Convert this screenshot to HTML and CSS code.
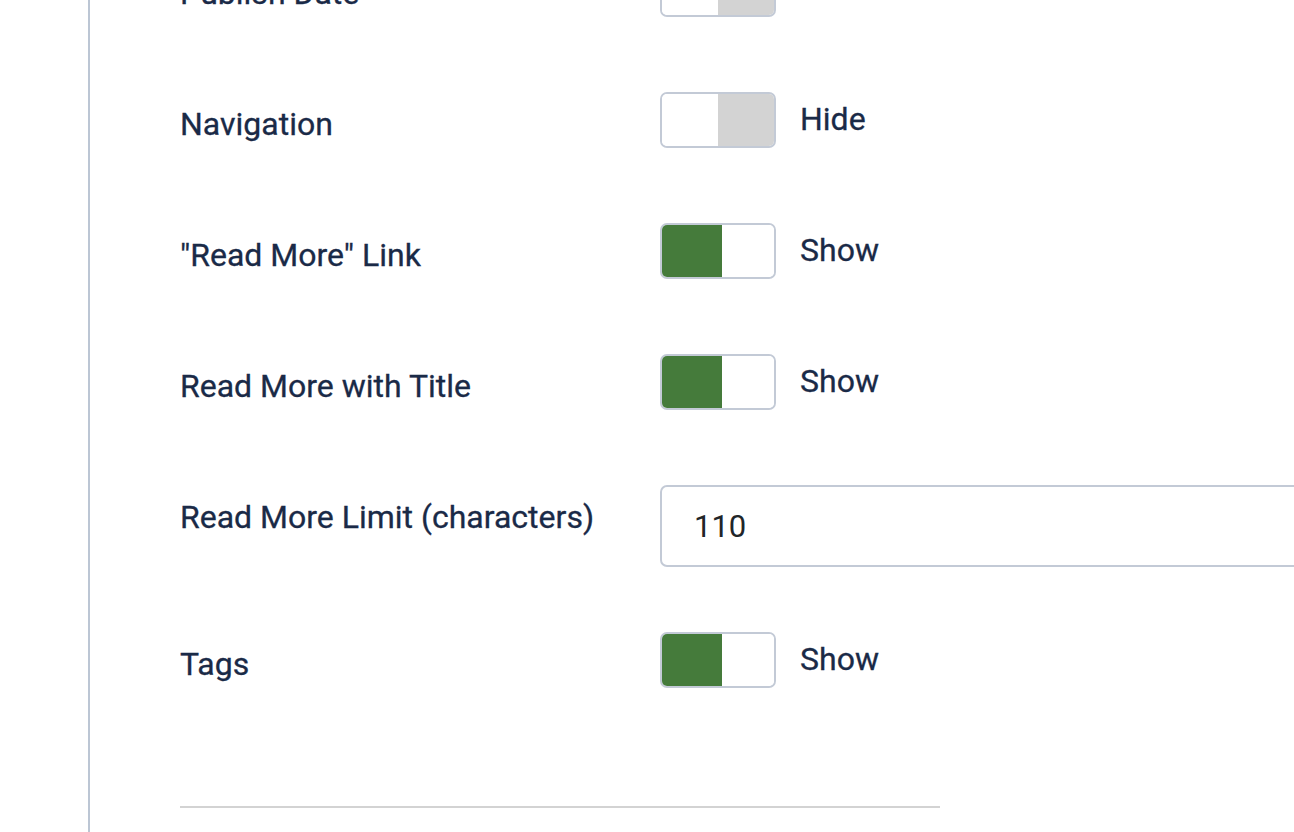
FILE: index.html
```html
<!DOCTYPE html>
<html lang="en">
<head>
<meta charset="utf-8">
<title>Options</title>
<link rel="stylesheet" href="styles.css">
</head>
<body>
<div class="page">
  <div class="panel">
    <div class="fields">
      <div class="row">
        <div class="label">Publish Date</div>
        <div class="control">
          <span class="switch off"><span class="half a"></span><span class="half b"></span></span>
          <span class="state">Hide</span>
        </div>
      </div>
      <div class="row">
        <div class="label">Navigation</div>
        <div class="control">
          <span class="switch off"><span class="half a"></span><span class="half b"></span></span>
          <span class="state">Hide</span>
        </div>
      </div>
      <div class="row">
        <div class="label">"Read More" Link</div>
        <div class="control">
          <span class="switch on"><span class="half a"></span><span class="half b"></span></span>
          <span class="state">Show</span>
        </div>
      </div>
      <div class="row">
        <div class="label">Read More with Title</div>
        <div class="control">
          <span class="switch on"><span class="half a"></span><span class="half b"></span></span>
          <span class="state">Show</span>
        </div>
      </div>
      <div class="row">
        <div class="label">Read More Limit (characters)</div>
        <div class="control">
          <input class="text-input" type="text" value="110">
        </div>
      </div>
      <div class="row">
        <div class="label">Tags</div>
        <div class="control">
          <span class="switch on"><span class="half a"></span><span class="half b"></span></span>
          <span class="state">Show</span>
        </div>
      </div>
    </div>
    <hr class="divider">
  </div>
</div>
</body>
</html>
```

FILE: styles.css
```css
html, body {
  margin: 0;
  padding: 0;
  background: #ffffff;
  overflow: hidden;
}
body {
  font-family: Roboto, "Liberation Sans", Arial, sans-serif;
  color: #1a2a47;
  width: 1294px;
  height: 832px;
}
.page {
  padding-left: 88px;
  height: 832px;
  overflow: hidden;
}
.panel {
  display: flow-root;
  border-left: 2px solid #bcc6d4;
  min-height: 832px;
  padding-left: 90px;
  box-sizing: border-box;
}
.fields {
  display: flex;
  flex-direction: column;
  gap: 65px;
  margin-top: -39px;
}
.row {
  display: grid;
  grid-template-columns: 480px 1fr;
  min-height: 66px;
  align-items: start;
}
.label {
  font-size: 32px;
  line-height: 46px;
  padding-top: 9px;
  -webkit-text-stroke: 0.3px #1a2a47;
}
.control {
  display: flex;
  align-items: flex-start;
  gap: 24px;
}
.switch {
  display: flex;
  width: 116px;
  height: 56px;
  box-sizing: border-box;
  border: 2px solid #c3cad6;
  border-radius: 7px;
  overflow: hidden;
  flex: none;
}
.switch .half {
  display: block;
  height: 100%;
}
.switch.off .a { width: 56px; background: #ffffff; }
.switch.off .b { flex: 1; background: #d3d3d3; }
.switch.on .a { width: 60px; background: #457b3b; }
.switch.on .b { flex: 1; background: #ffffff; }
.state {
  font-size: 32px;
  line-height: 46px;
  padding-top: 4px;
  -webkit-text-stroke: 0.3px #1a2a47;
}
.text-input {
  display: block;
  width: 700px;
  height: 82px;
  box-sizing: border-box;
  border: 2px solid #c3cad6;
  border-radius: 7px;
  padding: 0 0 0 32px;
  font-family: Roboto, "Liberation Sans", Arial, sans-serif;
  font-size: 31px;
  color: #212529;
  background: #fff;
  outline: none;
}
.divider {
  margin: 108px 0 0 0;
  width: 760px;
  border: 0;
  border-top: 2px solid #d3d3d3;
  height: 0;
}
```
